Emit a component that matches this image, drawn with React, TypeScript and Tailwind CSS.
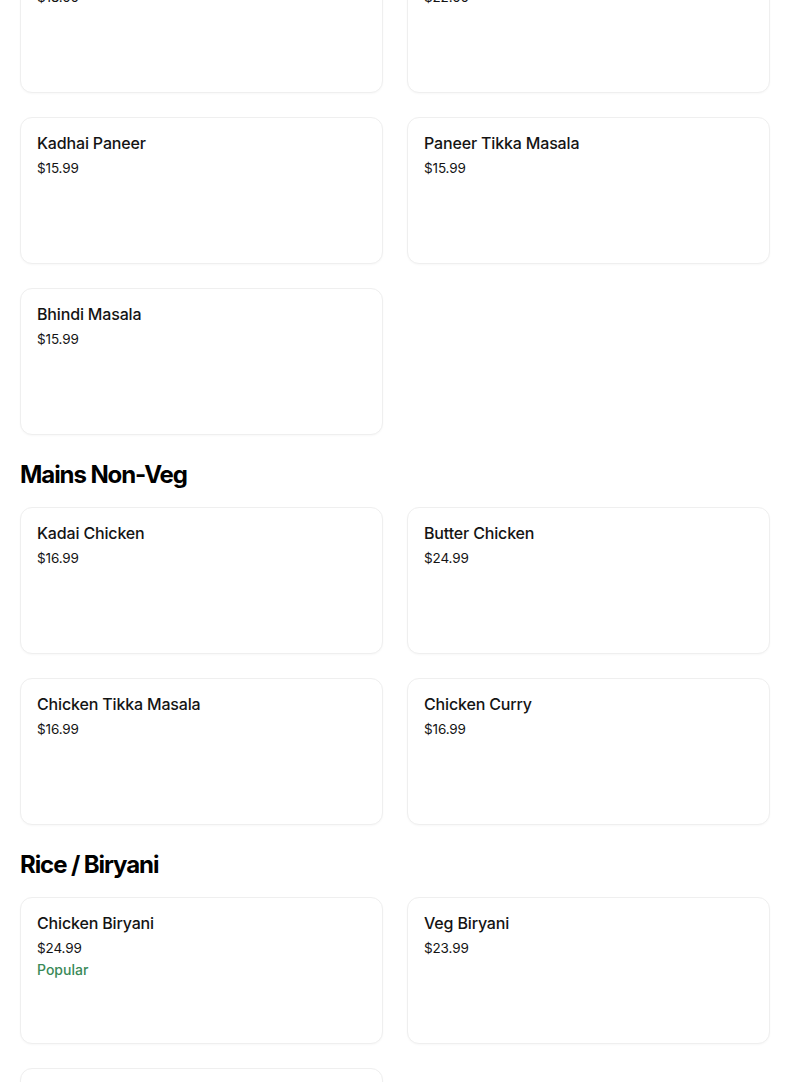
type Item = { name: string; price: string; popular?: boolean };
type Section = { title?: string; items: Item[] };

const sections: Section[] = [
  {
    items: [
      { name: 'Malai Kofta', price: '$18.00' },
      { name: 'Shahi Paneer', price: '$22.00' },
      { name: 'Kadhai Paneer', price: '$15.99' },
      { name: 'Paneer Tikka Masala', price: '$15.99' },
      { name: 'Bhindi Masala', price: '$15.99' },
    ],
  },
  {
    title: 'Mains Non-Veg',
    items: [
      { name: 'Kadai Chicken', price: '$16.99' },
      { name: 'Butter Chicken', price: '$24.99' },
      { name: 'Chicken Tikka Masala', price: '$16.99' },
      { name: 'Chicken Curry', price: '$16.99' },
    ],
  },
  {
    title: 'Rice / Biryani',
    items: [
      { name: 'Chicken Biryani', price: '$24.99', popular: true },
      { name: 'Veg Biryani', price: '$23.99' },
      { name: 'Jeera Rice', price: '$6.99' },
    ],
  },
];

function ItemCard({ item }: { item: Item }) {
  return (
    <div className="h-[147px] rounded-xl border border-[#efefef] bg-white px-4 pt-[15px] shadow-[0_1px_2px_rgba(0,0,0,0.03)]">
      <div className="text-[16px] leading-5 font-medium tracking-[-0.01em] text-[#141414]">{item.name}</div>
      <div className="mt-[5px] text-[13.5px] leading-5 tracking-[-0.01em] text-[#141414]">{item.price}</div>
      {item.popular && (
        <div className="mt-[2px] text-[14px] leading-5 font-medium text-[#3a8a58]">Popular</div>
      )}
    </div>
  );
}

export default function App() {
  return (
    <div
      className="min-h-screen bg-white overflow-hidden"
      style={{ fontFamily: 'Inter, "Liberation Sans", sans-serif' }}
    >
      <div className="w-[750px] ml-5 -mt-[54px] flex flex-col gap-6">
        {sections.map((s, i) => (
          <div key={i}>
            {s.title && (
              <h2 className="h-8 leading-8 text-[24px] font-bold tracking-[-0.045em] text-black mb-4">
                {s.title}
              </h2>
            )}
            <div className="grid grid-cols-2 gap-6">
              {s.items.map((it) => (
                <ItemCard key={it.name} item={it} />
              ))}
            </div>
          </div>
        ))}
      </div>
    </div>
  );
}
